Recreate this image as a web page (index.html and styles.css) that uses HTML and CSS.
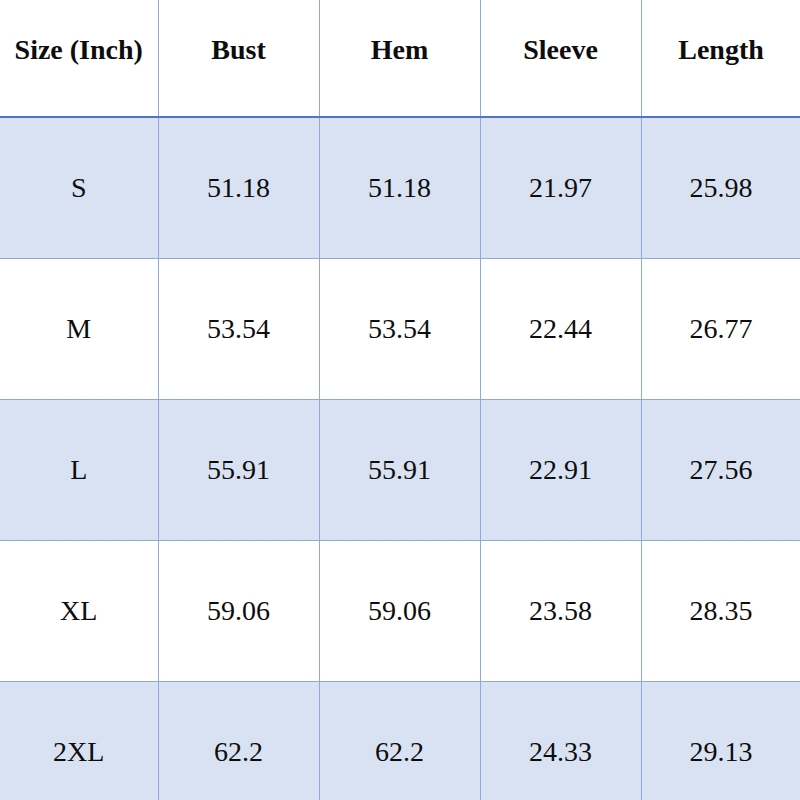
FILE: index.html
```html
<!DOCTYPE html>
<html>
<head>
<meta charset="utf-8">
<link rel="stylesheet" href="styles.css">
</head>
<body>
<table class="size-table">
  <colgroup>
    <col class="c1"><col class="c2"><col class="c2"><col class="c2"><col class="c5">
  </colgroup>
  <thead>
    <tr><th>Size (Inch)</th><th>Bust</th><th>Hem</th><th>Sleeve</th><th>Length</th></tr>
  </thead>
  <tbody>
    <tr class="band"><td>S</td><td>51.18</td><td>51.18</td><td>21.97</td><td>25.98</td></tr>
    <tr><td>M</td><td>53.54</td><td>53.54</td><td>22.44</td><td>26.77</td></tr>
    <tr class="band"><td>L</td><td>55.91</td><td>55.91</td><td>22.91</td><td>27.56</td></tr>
    <tr><td>XL</td><td>59.06</td><td>59.06</td><td>23.58</td><td>28.35</td></tr>
    <tr class="band"><td>2XL</td><td>62.2</td><td>62.2</td><td>24.33</td><td>29.13</td></tr>
  </tbody>
</table>
</body>
</html>
```

FILE: styles.css
```css
html, body {
  margin: 0;
  padding: 0;
  background: #ffffff;
}
.size-table {
  border-collapse: collapse;
  table-layout: fixed;
  width: 801px;
  font-family: "Liberation Serif", "Times New Roman", serif;
  color: #0d0d0d;
}
.c1 { width: 158px; }
.c2 { width: 161px; }
.c5 { width: 160px; }
.size-table th,
.size-table td {
  border-left: 1px solid #8fa9dc;
  border-right: 1px solid #8fa9dc;
  text-align: center;
  padding: 0;
}
.size-table th:first-child,
.size-table td:first-child { border-left: none; }
.size-table th {
  height: 117px;
  font-size: 28px;
  font-weight: bold;
  vertical-align: middle;
  padding-bottom: 16px;
  box-sizing: border-box;
  border-bottom: 2px solid #4f74c8;
}
.size-table td {
  height: 140px;
  font-size: 28px;
  border-bottom: 1px solid #8fa9dc;
  vertical-align: middle;
}
.size-table tr.band td {
  background: #d9e2f3;
}
```
